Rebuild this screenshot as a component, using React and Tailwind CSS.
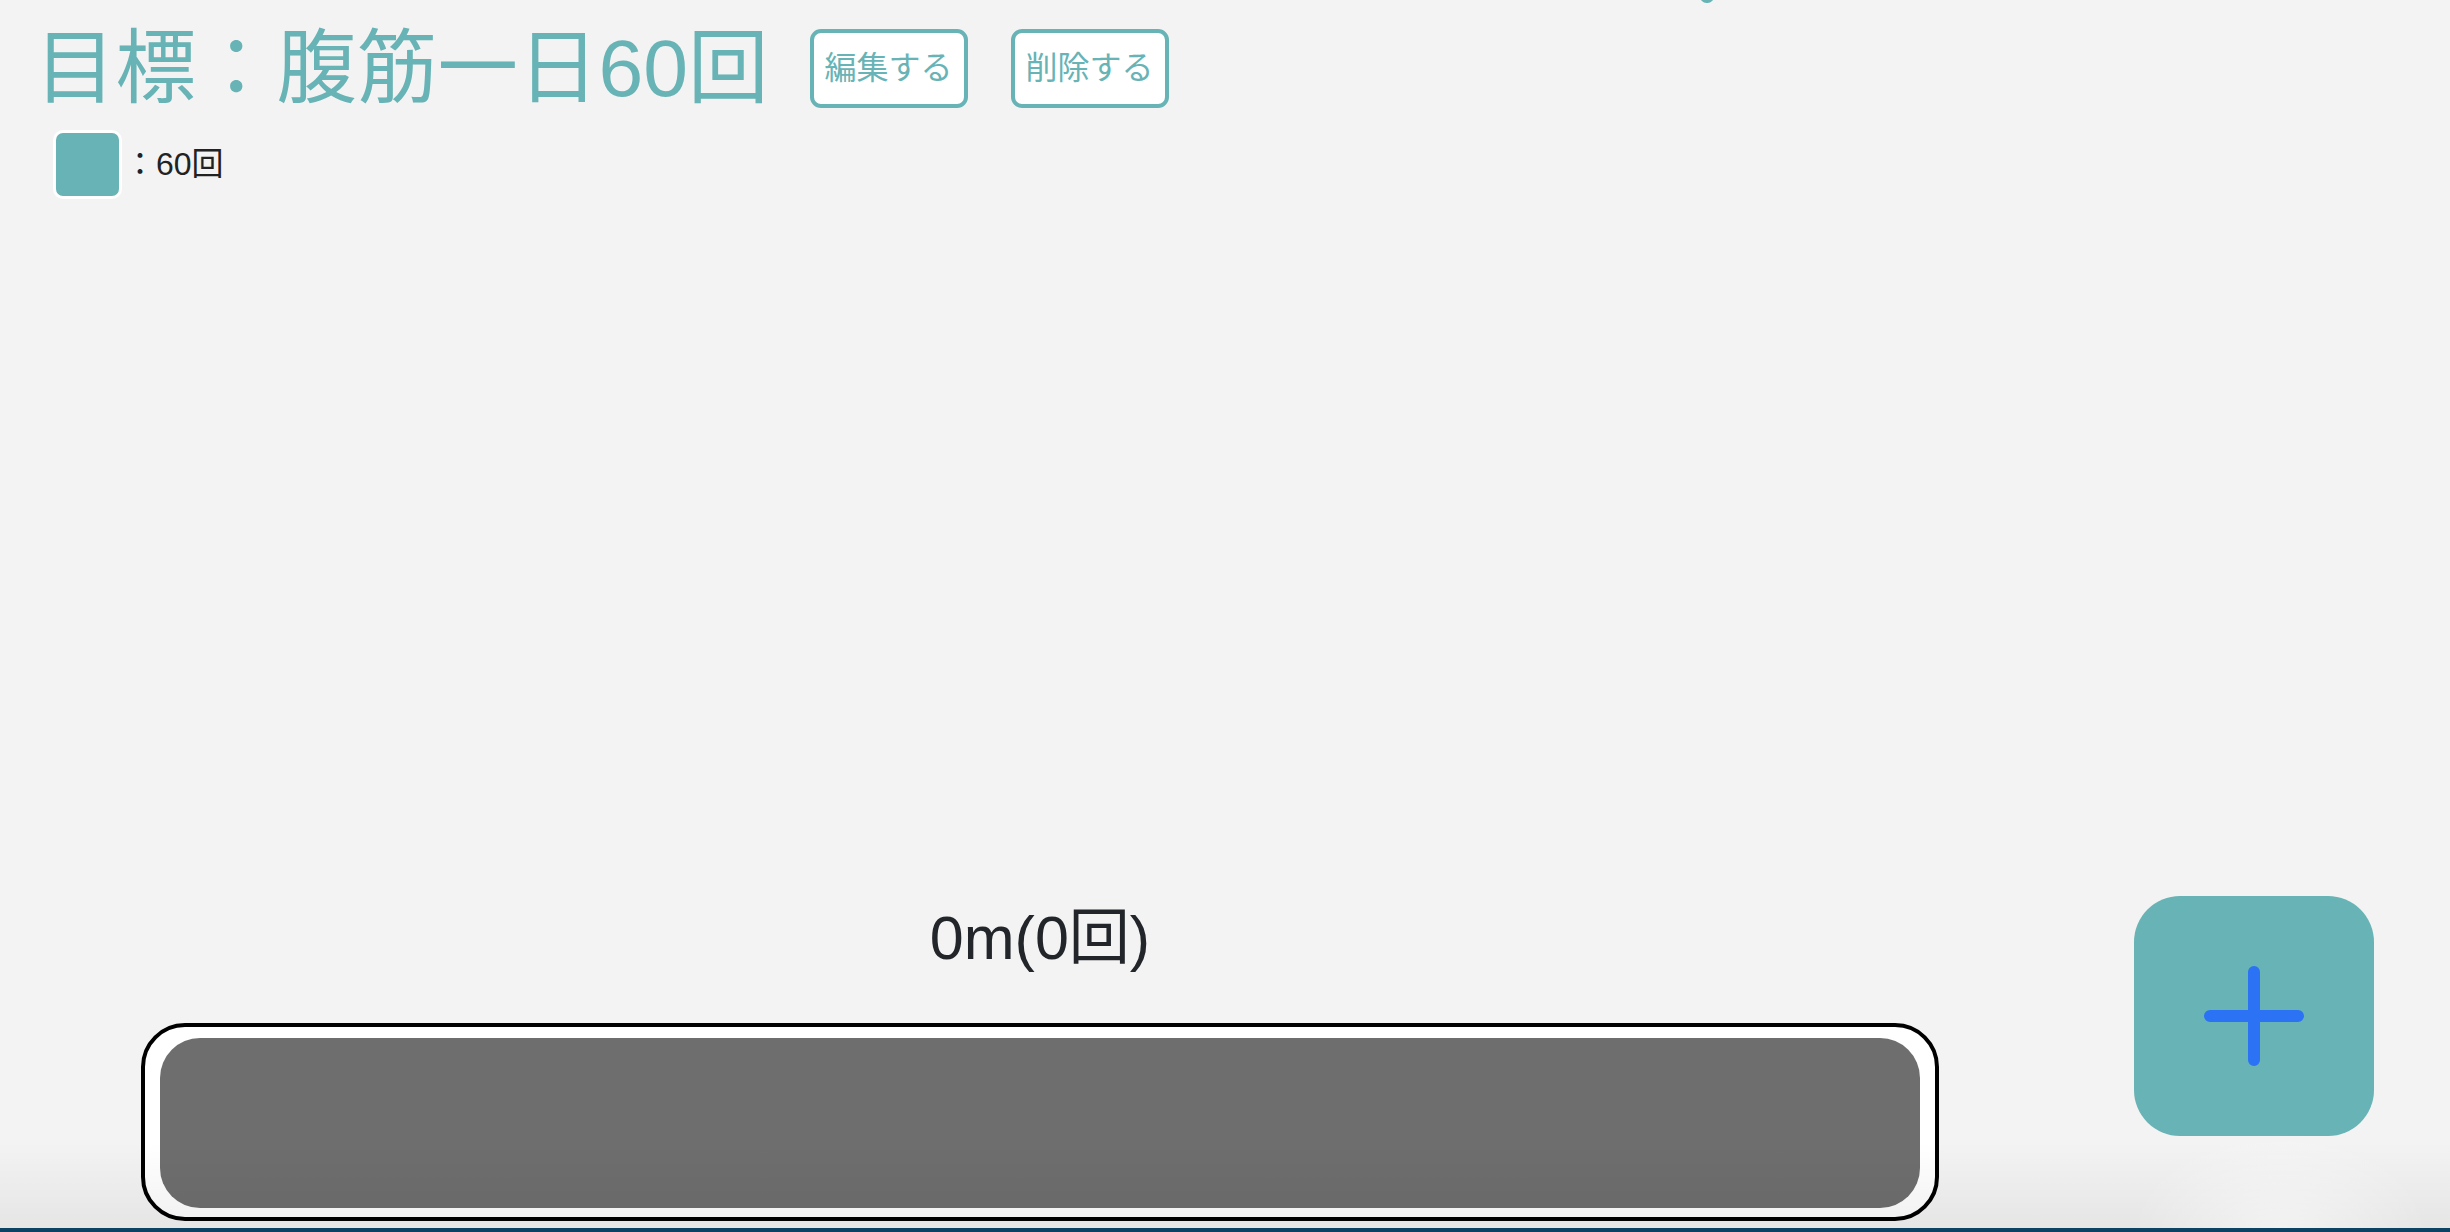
import React from "react";

const FONT = { fontFamily: '"Liberation Sans", "Noto Sans CJK JP", sans-serif' };

function PlusIcon() {
  return (
    <svg width="112" height="112" viewBox="0 0 112 112" fill="none">
      <path d="M56 12V100M12 56H100" stroke="#2b72f5" strokeWidth="12" strokeLinecap="round" />
    </svg>
  );
}

export default function App() {
  return (
    <div
      className="relative flex h-screen w-full flex-col overflow-hidden bg-[#f3f3f3]"
      style={FONT}
    >
      {/* partially visible element at top */}
      <div className="absolute left-[1700px] top-[-10px] h-[13px] w-[14px] rounded-full bg-[#68b3b5]" />

      {/* header */}
      <div className="flex items-center pl-[35px] pt-[28px]">
        <h1 className="text-[80.5px] font-normal leading-none text-[#68b3b5]">目標：腹筋一日60回</h1>
        <button className="ml-[41px] flex h-[79px] items-center rounded-[11px] border-[4px] border-[#68b3b5] bg-white px-[11px] text-[32px] leading-none text-[#68b3b5]">
          編集する
        </button>
        <button className="ml-[43px] flex h-[79px] items-center rounded-[11px] border-[4px] border-[#68b3b5] bg-white px-[11px] text-[32px] leading-none text-[#68b3b5]">
          削除する
        </button>
      </div>

      {/* legend */}
      <div className="ml-[53px] mt-[21px] flex items-center">
        <div className="h-[69px] w-[69px] rounded-[10px] border-[3px] border-white bg-[#68b3b5]" />
        <span className="ml-[2px] text-[32px] leading-none text-[#222222]">：60回</span>
      </div>

      <div className="flex-1" />

      {/* bottom area */}
      <div className="flex items-end pb-[11px] pl-[141px] pr-[76px]">
        <div className="flex w-[1798px] flex-col items-center">
          <div className="text-[61px] leading-none text-[#222529]">0m(0回)</div>
          <div className="mt-[54px] w-full rounded-[44px] border-[4px] border-black bg-white pb-[9px] pl-[15px] pr-[15px] pt-[11px]">
            <div className="h-[170px] w-full rounded-[40px] bg-[#6e6e6e]" />
          </div>
        </div>
        <div className="flex-1" />
        <button className="mb-[85px] flex h-[240px] w-[240px] items-center justify-center rounded-[46px] bg-[#68b3b5]">
          <PlusIcon />
        </button>
      </div>

      {/* bottom shadow overlay */}
      <div className="pointer-events-none absolute bottom-0 left-0 h-[90px] w-full bg-gradient-to-b from-transparent to-[rgba(0,0,0,0.06)]" />
      <div className="pointer-events-none absolute bottom-0 left-[2130px] h-[100px] w-[300px] bg-[radial-gradient(ellipse_at_bottom,rgba(255,255,255,0.5),rgba(255,255,255,0)_70%)]" />
      <div className="pointer-events-none absolute bottom-0 left-0 h-[4px] w-full bg-[#0d4264]" />
    </div>
  );
}
